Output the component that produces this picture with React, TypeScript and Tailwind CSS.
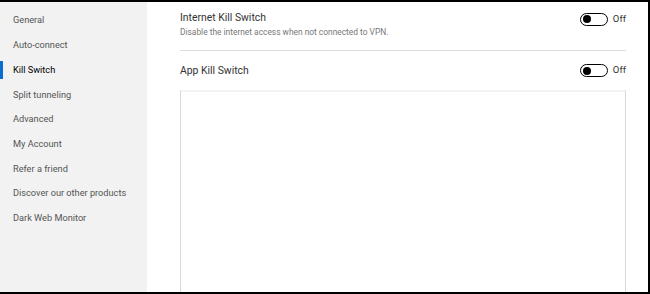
import React from 'react';

const navItems = [
  'General',
  'Auto-connect',
  'Kill Switch',
  'Split tunneling',
  'Advanced',
  'My Account',
  'Refer a friend',
  'Discover our other products',
  'Dark Web Monitor',
];

const Toggle: React.FC = () => (
  <div className="flex items-center gap-[5px]">
    <div className="w-[28px] h-[13px] rounded-full border-[1.5px] border-black flex items-center px-[2px]">
      <div className="w-[8px] h-[8px] rounded-full bg-black" />
    </div>
    <span className="text-[9.5px] text-[#333]">Off</span>
  </div>
);

const App: React.FC = () => {
  const active = 'Kill Switch';

  return (
    <div
      className="w-[650px] h-[294px] flex overflow-hidden bg-white border-t-2 border-r-2 border-b-2 border-black"
      style={{ fontFamily: 'Roboto, "Liberation Sans", Arial, sans-serif' }}
    >
      <aside className="w-[147px] shrink-0 bg-[#f2f2f2] pt-[6px]">
        {navItems.map((item) => (
          <div key={item} className="relative h-[24.7px] flex items-center pl-[13px]">
            {item === active && <span className="absolute left-0 top-[4px] bottom-[3px] w-[3px] bg-[#0a6ed1]" />}
            <span className={`text-[9.2px] ${item === active ? 'text-black' : 'text-[#555]'}`}>{item}</span>
          </div>
        ))}
      </aside>

      <main className="flex-1 flex flex-col pl-[33px] pr-[22px]">
        <div className="flex items-start justify-between pt-[9px] pb-[12px] border-b border-[#dcdcdc]">
          <div>
            <div className="text-[10.4px] text-[#333] leading-[14px]">Internet Kill Switch</div>
            <div className="text-[8.4px] text-[#777] leading-[12px] mt-[1px]">Disable the internet access when not connected to VPN.</div>
          </div>
          <div className="pt-[1px]">
            <Toggle />
          </div>
        </div>

        <div className="flex items-center justify-between h-[39px]">
          <div className="text-[10.4px] text-[#333]">App Kill Switch</div>
          <Toggle />
        </div>

        <div className="flex-1 border-l border-r border-[#d9d9d9] border-t-2 border-t-[#f2f2f2]" />
      </main>
    </div>
  );
};

export default App;
